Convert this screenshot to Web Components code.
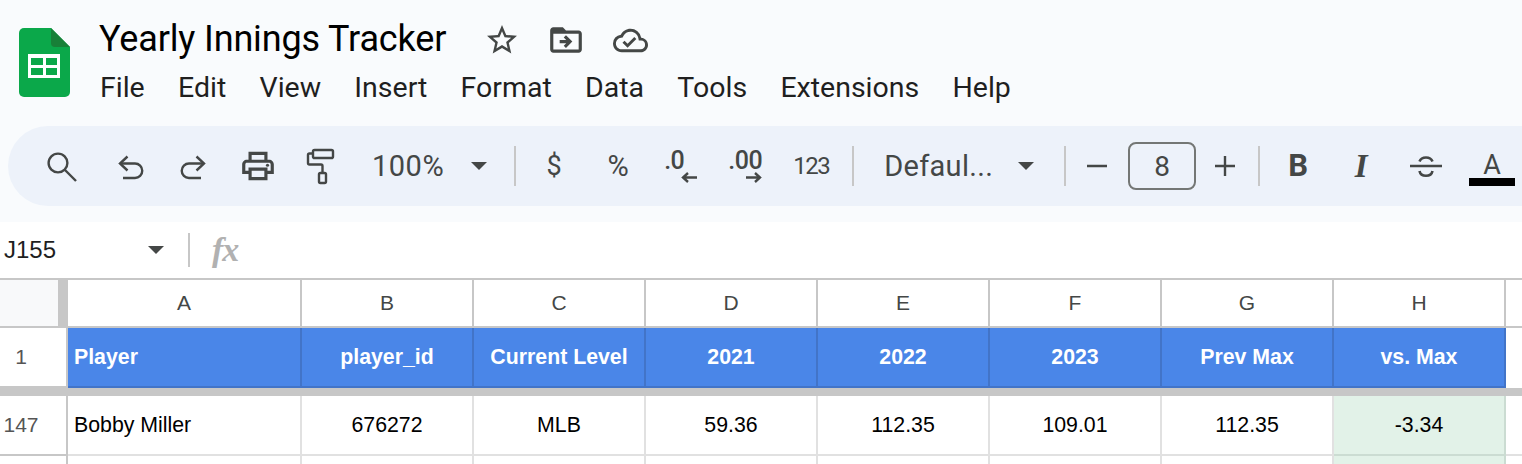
<!DOCTYPE html>
<html lang="en">
<head>
<meta charset="utf-8">
<title>Yearly Innings Tracker</title>
<style>
  html, body { margin: 0; height: 464px; overflow: hidden; background: #f9fbfd; }
  body { font-family: Roboto, "Liberation Sans", sans-serif; }
  sheet-grid { font-family: "Liberation Sans", Arial, sans-serif; }
</style>
</head>
<body>
<doc-header title-text="Yearly Innings Tracker"></doc-header>

<sheet-toolbar>
  <tool-icon name="search" style="margin-right:4px"></tool-icon>
  <tool-icon name="undo"></tool-icon>
  <tool-icon name="redo"></tool-icon>
  <tool-icon name="print"></tool-icon>
  <tool-icon name="roller"></tool-icon>
  <tool-text size="29" spacing="0.5" style="margin-left:18px">100%</tool-text>
  <tool-caret style="margin-left:27px"></tool-caret>
  <tool-sep style="margin-left:27px"></tool-sep>
  <tool-text size="27" width="64" style="margin-left:6px">$</tool-text>
  <tool-text size="29" width="64">%</tool-text>
  <decimal-btn label=".0" dir="left" style="margin-left:14px"></decimal-btn>
  <decimal-btn label=".00" dir="right" style="margin-left:44px"></decimal-btn>
  <tool-text size="24" spacing="-1.5" style="margin-left:31px">123</tool-text>
  <tool-sep style="margin-left:23px"></tool-sep>
  <tool-text size="29" spacing="0.3" style="margin-left:30px">Defaul...</tool-text>
  <tool-caret style="margin-left:25px"></tool-caret>
  <tool-sep style="margin-left:30px"></tool-sep>
  <tool-icon name="minus" width="61"></tool-icon>
  <size-box style="margin-left:1px">8</size-box>
  <tool-icon name="plus" width="58"></tool-icon>
  <tool-sep style="margin-left:4px"></tool-sep>
  <tool-text size="31" width="64" weight="700" style="margin-left:6px">B</tool-text>
  <tool-text size="33" width="64" weight="700" italic serif style="margin-left:-1px">I</tool-text>
  <tool-icon name="strike" style="margin-left:1px"></tool-icon>
  <color-a style="margin-left:11px">A</color-a>
</sheet-toolbar>

<formula-bar cell="J155"></formula-bar>

<sheet-grid>
  <grid-cell kind="corner"></grid-cell>
  <grid-cell kind="col">A</grid-cell>
  <grid-cell kind="col">B</grid-cell>
  <grid-cell kind="col">C</grid-cell>
  <grid-cell kind="col">D</grid-cell>
  <grid-cell kind="col">E</grid-cell>
  <grid-cell kind="col">F</grid-cell>
  <grid-cell kind="col">G</grid-cell>
  <grid-cell kind="col">H</grid-cell>
  <grid-cell kind="col" last></grid-cell>

  <grid-cell kind="row">1</grid-cell>
  <grid-cell kind="head" left>Player</grid-cell>
  <grid-cell kind="head">player_id</grid-cell>
  <grid-cell kind="head">Current Level</grid-cell>
  <grid-cell kind="head">2021</grid-cell>
  <grid-cell kind="head">2022</grid-cell>
  <grid-cell kind="head">2023</grid-cell>
  <grid-cell kind="head">Prev Max</grid-cell>
  <grid-cell kind="head">vs. Max</grid-cell>
  <grid-cell kind="blank" last></grid-cell>

  <grid-cell kind="freeze"></grid-cell>

  <grid-cell kind="row">147</grid-cell>
  <grid-cell left>Bobby Miller</grid-cell>
  <grid-cell>676272</grid-cell>
  <grid-cell>MLB</grid-cell>
  <grid-cell>59.36</grid-cell>
  <grid-cell>112.35</grid-cell>
  <grid-cell>109.01</grid-cell>
  <grid-cell>112.35</grid-cell>
  <grid-cell kind="good">-3.34</grid-cell>
  <grid-cell last></grid-cell>

  <grid-cell kind="row"></grid-cell>
  <grid-cell></grid-cell>
  <grid-cell></grid-cell>
  <grid-cell></grid-cell>
  <grid-cell></grid-cell>
  <grid-cell></grid-cell>
  <grid-cell></grid-cell>
  <grid-cell></grid-cell>
  <grid-cell kind="good"></grid-cell>
  <grid-cell last></grid-cell>
</sheet-grid>

<script>
const ICONS = {
  search: `<svg width="36" height="36" viewBox="-1 0 36 36" fill="none" stroke="#444746" stroke-width="2.4"><circle cx="13" cy="15" r="9.4"/><path d="M20 22l11 11"/></svg>`,
  undo: `<svg width="30" height="30" viewBox="0 0 30 30" fill="none" stroke="#444746" stroke-width="2.4"><path d="M12.5 5.500L5 12.500l7.500 7"/><path d="M5 12.500h15a6.500 6.500 0 0 1 0 14.500H8"/></svg>`,
  redo: `<svg width="30" height="30" viewBox="0 0 30 30" fill="none" stroke="#444746" stroke-width="2.4"><path d="M17.500 5.500L25 12.500l-7.500 7"/><path d="M25 12.500H10a6.500 6.500 0 0 0 0 14.500h12"/></svg>`,
  print: `<svg width="38" height="38" viewBox="0 0 24 24" fill="#444746"><path d="M19 8h-1V3H6v5H5c-1.660 0-3 1.340-3 3v6h4v4h12v-4h4v-6c0-1.660-1.340-3-3-3zM8 5h8v3H8V5zm8 12v2H8v-4h8v2zm2-2v-2H6v2H4v-4c0-.55.45-1 1-1h14c.55 0 1 .45 1 1v4h-2z"/><circle cx="18" cy="11.500" r="1"/></svg>`,
  roller: `<svg width="32" height="38" viewBox="2 0 32 38" fill="none" stroke="#444746" stroke-width="2.4"><rect x="9" y="3" width="20" height="8" rx="1.600"/><path d="M9 6.500H5.500A1.500 1.500 0 0 0 4 8v8a1.500 1.500 0 0 0 1.500 1.500h11.500a1.500 1.500 0 0 1 1.500 1.500v7"/><rect x="15" y="26" width="7" height="10" rx="1.400"/></svg>`,
  minus: `<svg width="22" height="4" viewBox="0 0 22 4"><path d="M1 2h20" stroke="#444746" stroke-width="2.4"/></svg>`,
  plus: `<svg width="22" height="22" viewBox="0 0 22 22"><path d="M1 11h20M11 1v20" stroke="#444746" stroke-width="2.4"/></svg>`,
  strike: `<svg width="34" height="28" viewBox="0 0 34 28" fill="none" stroke="#444746" stroke-width="2.6"><path d="M1 14h32"/><path d="M10.500 9.500c1-2.600 3.400-4 6.500-4s5.500 1.400 6.500 4"/><path d="M10.500 19c.6 3 3.300 4.800 6.500 4.800s5.900-1.800 6.500-4.800"/></svg>`,
  star: `<svg width="36" height="36" viewBox="0 0 24 24" fill="#444746"><path d="M22 9.240l-7.190-.62L12 2 9.190 8.630 2 9.240l5.460 4.730L5.820 21 12 17.270 18.180 21l-1.630-7.030L22 9.240zM12 15.400l-3.760 2.270 1-4.280-3.320-2.880 4.380-.38L12 6.100l1.710 4.040 4.380.38-3.320 2.880 1 4.280L12 15.400z"/></svg>`,
  folder: `<svg width="38" height="38" viewBox="0 0 24 24" fill="#444746"><path d="M20 6h-8l-2-2H4c-1.100 0-2 .9-2 2v12c0 1.100.9 2 2 2h16c1.100 0 2-.9 2-2V8c0-1.100-.9-2-2-2zm0 12H4V8h16v10z"/><path d="M12.160 12H8v2h4.160l-1.590 1.590L11.990 17 16 13l-4.010-4-1.420 1.410z"/></svg>`,
  cloud: `<svg width="35" height="35" viewBox="0 0 24 24" fill="#444746"><path d="M19.350 10.040A7.490 7.490 0 0 0 12 4C9.110 4 6.600 5.640 5.350 8.040A5.994 5.994 0 0 0 0 14c0 3.310 2.690 6 6 6h13c2.760 0 5-2.240 5-5 0-2.640-2.050-4.780-4.650-4.960zM19 18H6c-2.210 0-4-1.790-4-4 0-2.050 1.530-3.760 3.560-3.970l1.070-.11.5-.95A5.469 5.469 0 0 1 12 6c2.620 0 4.880 1.860 5.390 4.430l.3 1.500 1.530.11A2.980 2.980 0 0 1 22 15c0 1.650-1.350 3-3 3zm-9-3.820l-2.090-2.090L6.500 13.500 10 17l6.010-6.010-1.410-1.410z"/></svg>`
};

class ToolIcon extends HTMLElement {
  constructor() {
    super();
    this.attachShadow({ mode: "open" });
  }
  connectedCallback() {
    const width = this.getAttribute("width") || 64;
    this.shadowRoot.innerHTML = `
      <style>
        :host { display: flex; align-items: center; justify-content: center; flex: none; height: 40px; width: ${width}px; }
        svg { display: block; flex: none; }
      </style>
      ${ICONS[this.getAttribute("name")]}`;
  }
}
customElements.define("tool-icon", ToolIcon);

class DocHeader extends HTMLElement {
  constructor() {
    super();
    this.attachShadow({ mode: "open" });
  }
  connectedCallback() {
    const menus = ["File", "Edit", "View", "Insert", "Format", "Data", "Tools", "Extensions", "Help"];
    this.shadowRoot.innerHTML = `
      <style>
        :host { display: flex; height: 126px; box-sizing: border-box; padding: 28px 0 0 19px; }
        .logo { display: block; flex: none; width: 51px; height: 69px; }
        .main { margin-left: 29px; margin-top: -11px; }
        .title-row { display: flex; align-items: center; height: 44px; }
        .title { font-size: 36px; color: #000; letter-spacing: -0.15px; }
        .icons { display: flex; align-items: center; margin: 2px 0 0 38px; }
        .icons tool-icon { width: 36px; margin-right: 28px; }
        .menu { display: flex; gap: 33.25px; margin: 9px 0 0 1px; font-size: 28.5px; line-height: 36px; color: #1f1f1f; }
      </style>
      <svg class="logo" viewBox="0 0 51 69">
        <path d="M5 0h27l19 19v45a5 5 0 0 1-5 5H5a5 5 0 0 1-5-5V5a5 5 0 0 1 5-5z" fill="#0ba84a"/>
        <path d="M32 0l19 19H36a4 4 0 0 1-4-4z" fill="#188038"/>
        <path d="M9 26h32v24H9z" fill="#fff"/>
        <path d="M12 30h12v7H12zM27 30h11v7H27zM12 40h12v7H12zM27 40h11v7H27z" fill="#0ba84a"/>
      </svg>
      <div class="main">
        <div class="title-row">
          <span class="title">${this.getAttribute("title-text")}</span>
          <div class="icons">
            <tool-icon name="star"></tool-icon>
            <tool-icon name="folder"></tool-icon>
            <tool-icon name="cloud"></tool-icon>
          </div>
        </div>
        <div class="menu">${menus.map(m => `<span>${m}</span>`).join("")}</div>
      </div>`;
  }
}
customElements.define("doc-header", DocHeader);

class SheetToolbar extends HTMLElement {
  constructor() {
    super();
    this.attachShadow({ mode: "open" });
    this.shadowRoot.innerHTML = `
      <style>
        :host {
          display: flex;
          align-items: center;
          height: 80px;
          margin-left: 8px;
          padding-left: 22px;
          border-radius: 40px 0 0 40px;
          background: #edf2fa;
          color: #444746;
          overflow: hidden;
        }
      </style>
      <slot></slot>`;
  }
}
customElements.define("sheet-toolbar", SheetToolbar);

class ToolText extends HTMLElement {
  constructor() {
    super();
    this.attachShadow({ mode: "open" });
  }
  connectedCallback() {
    const width = this.getAttribute("width");
    const family = this.hasAttribute("serif") ? `font-family: "Liberation Serif", serif;` : "";
    this.shadowRoot.innerHTML = `
      <style>
        :host {
          display: block;
          flex: none;
          text-align: center;
          font-size: ${this.getAttribute("size")}px;
          font-weight: ${this.getAttribute("weight") || 400};
          font-style: ${this.hasAttribute("italic") ? "italic" : "normal"};
          letter-spacing: ${this.getAttribute("spacing") || 0}px;
          ${width ? `width: ${width}px;` : ""}
          ${family}
          line-height: 40px;
          color: #444746;
        }
      </style>
      <slot></slot>`;
  }
}
customElements.define("tool-text", ToolText);

class ToolCaret extends HTMLElement {
  constructor() {
    super();
    this.attachShadow({ mode: "open" });
    this.shadowRoot.innerHTML = `
      <style>
        :host {
          display: block;
          flex: none;
          width: 0;
          height: 0;
          border-left: 8px solid transparent;
          border-right: 8px solid transparent;
          border-top: 8px solid #444746;
        }
      </style>`;
  }
}
customElements.define("tool-caret", ToolCaret);

class ToolSep extends HTMLElement {
  constructor() {
    super();
    this.attachShadow({ mode: "open" });
    this.shadowRoot.innerHTML = `
      <style>
        :host { display: block; flex: none; width: 2px; height: 40px; background: #c7c7c7; }
      </style>`;
  }
}
customElements.define("tool-sep", ToolSep);

class DecimalBtn extends HTMLElement {
  constructor() {
    super();
    this.attachShadow({ mode: "open" });
  }
  connectedCallback() {
    const left = this.getAttribute("dir") === "left";
    const arrow = left ? "M7 2L2 6.500l5 4.500M2 6.500h14" : "M9 2l5 4.500-5 4.500M0 6.500h14";
    this.shadowRoot.innerHTML = `
      <style>
        :host { display: flex; flex-direction: column; align-items: flex-start; flex: none; color: #444746; }
        .label { font-size: 25px; font-weight: 500; line-height: 26px; letter-spacing: -0.5px; }
        svg { display: block; margin-top: -3px; align-self: flex-end; }
        :host([dir="left"]) svg { margin-right: -13px; }
      </style>
      <span class="label">${this.getAttribute("label")}</span>
      <svg width="16" height="13" viewBox="0 0 16 13" fill="none" stroke="#444746" stroke-width="2.4"><path d="${arrow}"/></svg>`;
  }
}
customElements.define("decimal-btn", DecimalBtn);

class SizeBox extends HTMLElement {
  constructor() {
    super();
    this.attachShadow({ mode: "open" });
    this.shadowRoot.innerHTML = `
      <style>
        :host {
          display: flex;
          flex: none;
          align-items: center;
          justify-content: center;
          box-sizing: border-box;
          width: 68px;
          height: 48px;
          border: 2px solid #747775;
          border-radius: 8px;
          font-size: 28px;
          color: #444746;
        }
      </style>
      <slot></slot>`;
  }
}
customElements.define("size-box", SizeBox);

class ColorA extends HTMLElement {
  constructor() {
    super();
    this.attachShadow({ mode: "open" });
    this.shadowRoot.innerHTML = `
      <style>
        :host { display: flex; flex-direction: column; align-items: center; flex: none; width: 46px; font-size: 27px; line-height: 25px; color: #444746; margin-top: 7px; }
        .bar { width: 46px; height: 8px; background: #000; margin-top: 0; }
      </style>
      <slot></slot>
      <div class="bar"></div>`;
  }
}
customElements.define("color-a", ColorA);

class FormulaBar extends HTMLElement {
  constructor() {
    super();
    this.attachShadow({ mode: "open" });
  }
  connectedCallback() {
    this.shadowRoot.innerHTML = `
      <style>
        :host {
          display: flex;
          align-items: center;
          height: 56px;
          margin-top: 16px;
          padding-left: 4px;
          background: #fff;
        }
        .name { width: 144px; font-family: "Liberation Sans", Arial, sans-serif; font-size: 24px; color: #1f1f1f; }
        .sep { width: 2px; height: 34px; margin: 0 22px 0 24px; background: #c7c7c7; }
        .fx { font-family: "Liberation Serif", serif; font-style: italic; font-weight: 700; font-size: 34px; color: #b1b1b1; letter-spacing: -1px; }
      </style>
      <span class="name">${this.getAttribute("cell")}</span>
      <tool-caret></tool-caret>
      <div class="sep"></div>
      <span class="fx">fx</span>`;
  }
}
customElements.define("formula-bar", FormulaBar);

class SheetGrid extends HTMLElement {
  constructor() {
    super();
    this.attachShadow({ mode: "open" });
    this.shadowRoot.innerHTML = `
      <style>
        :host {
          display: grid;
          grid-template-columns: 68px 234px repeat(7, 172px) 16px;
          grid-template-rows: 48px 60px 8px 60px 30px;
          border-top: 2px solid #c7c7c7;
          background: #fff;
          font-size: 21.3px;
          color: #000;
        }
      </style>
      <slot></slot>`;
  }
}
customElements.define("sheet-grid", SheetGrid);

class GridCell extends HTMLElement {
  constructor() {
    super();
    this.attachShadow({ mode: "open" });
    this.shadowRoot.innerHTML = `
      <style>
        :host {
          display: flex;
          align-items: center;
          justify-content: center;
          box-sizing: border-box;
          min-width: 0;
          overflow: hidden;
          white-space: nowrap;
          border-right: 2px solid #e1e1e1;
          border-bottom: 2px solid #e1e1e1;
        }
        :host([left]) { justify-content: flex-start; padding-left: 6px; }
        :host([last]) { border-right: none; }
        :host([kind="corner"]) {
          background: linear-gradient(to right, #f8f9fa 58px, #c7c7c7 58px);
          border: none;
          border-bottom: 2px solid #c7c7c7;
        }
        :host([kind="col"]) {
          border-right-color: #c7c7c7;
          border-bottom-color: #c7c7c7;
          font-size: 21px;
          color: #444746;
        }
        :host([kind="row"]) {
          padding-right: 24px;
          border-right-color: #c7c7c7;
          border-bottom-color: #c7c7c7;
          font-size: 21px;
          color: #555;
        }
        :host([kind="head"]) {
          background: #4a86e8;
          color: #fff;
          font-weight: 700;
          border-right-color: #4274c8;
          border-bottom-color: #4274c8;
        }
        :host([kind="blank"]) { border: none; }
        :host([kind="freeze"]) { grid-column: 1 / -1; background: #c7c7c7; border: none; }
        :host([kind="good"]) {
          background: #e2f2e8;
          border-right-color: #cbdcd2;
          border-bottom-color: #cbdcd2;
        }
      </style>
      <slot></slot>`;
  }
}
customElements.define("grid-cell", GridCell);
</script>
</body>
</html>
